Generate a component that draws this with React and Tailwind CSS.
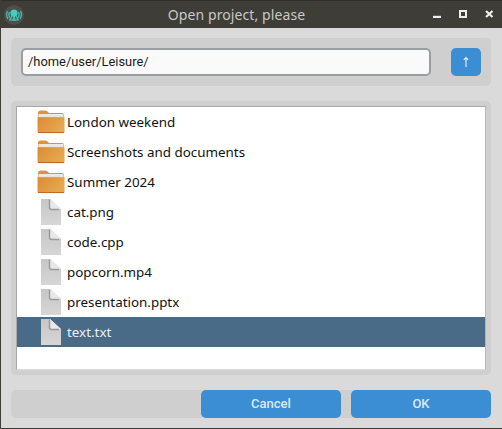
const rows = [
  ["folder", "London weekend"],
  ["folder", "Screenshots and documents"],
  ["folder", "Summer 2024"],
  ["file", "cat.png"],
  ["file", "code.cpp"],
  ["file", "popcorn.mp4"],
  ["file", "presentation.pptx"],
  ["file", "text.txt"],
];

function FolderIcon() {
  return (
    <svg width="28" height="24" viewBox="0 0 28 24" className="block">
      <defs>
        <linearGradient id="fg" x1="0" y1="0" x2="1" y2="0.5">
          <stop offset="0" stopColor="#dd8a35" />
          <stop offset="1" stopColor="#e6a850" />
        </linearGradient>
      </defs>
      <path d="M1 3Q1 0.5 3 0.5H8Q10 0.5 11 2L12 3H25Q27 3 27 5V8H1Z" fill="#e0913c" />
      <rect x="1.5" y="4" width="25" height="3.5" fill="#ece9e3" />
      <path d="M0.5 7H27.5V21.5Q27.5 23 26 23H2Q0.5 23 0.5 21.5Z" fill="url(#fg)" stroke="#f0d2a8" strokeWidth="0.4" />
      <rect x="1" y="22" width="26" height="1" fill="#bd6c28" />
    </svg>
  );
}

function FileIcon() {
  return (
    <svg width="20" height="26" viewBox="0 0 20 26" className="block">
      <defs>
        <linearGradient id="pg" x1="0" y1="0" x2="0" y2="1">
          <stop offset="0" stopColor="#c6c6c6" />
          <stop offset="1" stopColor="#d6d6d6" />
        </linearGradient>
      </defs>
      <path d="M0 0H9L20 10V26H0Z" fill="url(#pg)" />
      <path d="M9 0L20 10H11Q9 10 9 8Z" fill="#e8e8e8" />
      <path d="M8.5 0.5V8.5Q8.5 10.5 10.5 10.5H18" fill="none" stroke="#9a9a9a" strokeWidth="1.4" />
    </svg>
  );
}

function Logo() {
  return (
    <svg width="20" height="20" viewBox="0 0 20 20" className="block">
      <circle cx="10" cy="10" r="10" fill="#4e4e4b" />
      <path d="M3.5 6Q1.5 10 4 14M5.5 7Q4 10 6 13M16.5 6Q18.5 10 16 14M14.5 7Q16 10 14 13" fill="none" stroke="#3cc0b0" strokeWidth="1.3" />
      <circle cx="10" cy="8" r="3.6" fill="#45cdbd" />
      <path d="M8 10.5L6 15M9.5 11L9 16M10.5 11L11 16M12 10.5L14 15M5 15H15" stroke="#45cdbd" strokeWidth="1.1" fill="none" />
    </svg>
  );
}

export default function App() {
  return (
    <div className="w-[502px] h-[429px] flex flex-col bg-[#dadada] border-l border-b border-[#3e3d37] font-['Noto_Sans',sans-serif]">
      <div className="h-[28px] shrink-0 bg-[#3e3d37] flex items-center pl-[3px] pr-[7px] border-t border-[#2f2e29]">
        <Logo />
        <div className="flex-1 text-center text-[14px] text-[#c9c9c5] tracking-[0.1px] pl-[22px]">Open project, please</div>
        <svg width="68" height="27" viewBox="0 0 68 27" className="block">
          <rect x="6" y="14.8" width="8" height="2.2" fill="#eeeeec" />
          <path d="M33 10H39V16H33Z" fill="none" stroke="#eeeeec" strokeWidth="2" />
          <path d="M59 10L65.5 16M65.5 10L59 16" stroke="#eeeeec" strokeWidth="2.2" />
        </svg>
      </div>
      <div className="flex-1 flex flex-col pl-[10px] pr-[11px] pt-[10px] pb-[10px]">
        <div className="h-[48px] shrink-0 bg-[#cfcfcf] rounded-[5px] flex items-center px-[10px] gap-[20px]">
          <div className="w-[410px] h-[28px] bg-[#fafafa] border-2 border-[#9a9ea3] rounded-[5px] flex items-center pl-[5px] text-[12.9px] text-[#1a1a1a] font-['Roboto',sans-serif]">/home/user/Leisure/</div>
          <button className="w-[30px] h-[28px] bg-[#3b8ed4] rounded-[5px] flex items-center justify-center">
            <svg width="10" height="12" viewBox="0 0 10 12" className="block">
              <path d="M5 11V1.5M2.8 3.8L5 1.5L7.2 3.8" fill="none" stroke="#e8f2fa" strokeWidth="1.1" />
            </svg>
          </button>
        </div>
        <div className="h-[274px] shrink-0 mt-[15px] bg-[#cfcfcf] rounded-[5px] p-[5px]">
          <div className="h-full bg-white border border-[#a8a8a8] border-b-[#dddddd] border-r-[#b8b8b8]">
            {rows.map(([kind, name]) => {
              const selected = name === "text.txt";
              return (
                <div key={name} className={`h-[30px] flex items-center pl-[20px] ${selected ? "bg-[#4a6b88] text-[#eeeeee]" : "text-[#111111]"}`}>
                  <div className="w-[30px] shrink-0">{kind === "folder" ? <FolderIcon /> : <div className="pl-[4px]"><FileIcon /></div>}</div>
                  <span className="text-[13.4px] leading-none relative top-[0.5px]">{name}</span>
                </div>
              );
            })}
          </div>
        </div>
        <div className="h-[28px] shrink-0 mt-[15px] bg-[#cfcfcf] rounded-[5px] flex justify-end gap-[10px]">
          <button className="w-[140px] h-full bg-[#3b8ed4] rounded-[5px] text-[13px] font-medium text-[#dceaf6] font-['Roboto',sans-serif]">Cancel</button>
          <button className="w-[140px] h-full bg-[#3b8ed4] rounded-[5px] text-[13px] font-medium text-[#dceaf6] font-['Roboto',sans-serif]">OK</button>
        </div>
      </div>
    </div>
  );
}
